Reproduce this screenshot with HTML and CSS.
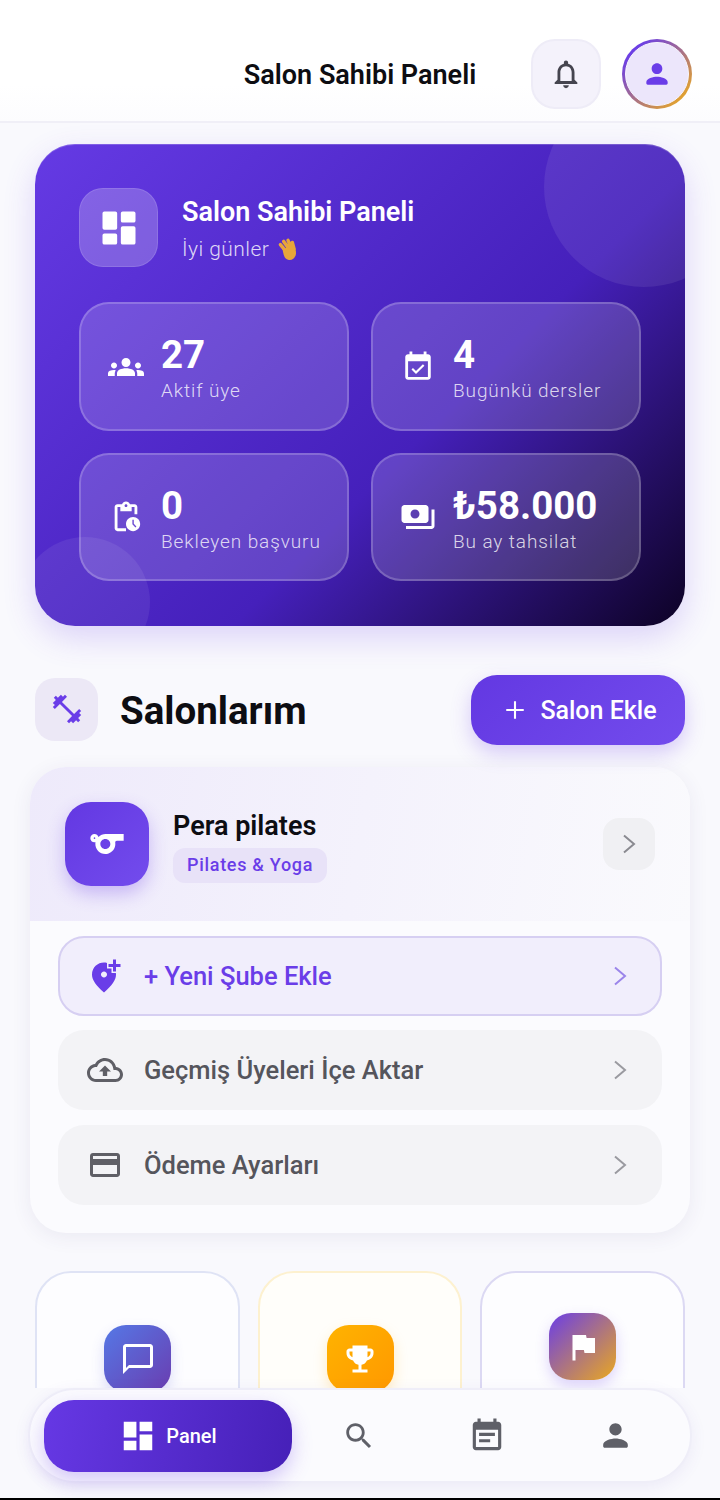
FILE: index.html
```html
<!DOCTYPE html>
<html lang="en">
<head>
  <meta charset="UTF-8" />
  <title>Salon Sahibi Paneli</title>
  <link rel="stylesheet" href="styles.css">
</head>
<body>
  <div class="page">

    <header class="topbar">
      <h1 class="topbar-title">Salon Sahibi Paneli</h1>
      <div class="topbar-actions">
        <button class="bell-btn">
          <svg width="34" height="34" viewBox="0 0 24 24" fill="#45454f"><path d="M12 22c1.1 0 2-.9 2-2h-4c0 1.1.9 2 2 2zm6-6v-5c0-3.07-1.63-5.64-4.5-6.32V4c0-.83-.67-1.5-1.5-1.5s-1.5.67-1.5 1.5v.68C7.64 5.36 6 7.92 6 11v5l-2 2v1h16v-1l-2-2zm-2 1H8v-6c0-2.48 1.51-4.5 4-4.5s4 2.02 4 4.5v6z"/></svg>
        </button>
        <div class="avatar-ring">
          <div class="avatar">
            <svg width="32" height="32" viewBox="0 0 24 24" fill="#6a3de8"><path d="M12 12c2.21 0 4-1.79 4-4s-1.79-4-4-4-4 1.79-4 4 1.79 4 4 4zm0 2c-2.67 0-8 1.34-8 4v1c0 .55.45 1 1 1h14c.55 0 1-.45 1-1v-1c0-2.66-5.33-4-8-4z"/></svg>
          </div>
        </div>
      </div>
    </header>

    <main class="content">

      <!-- Summary card -->
      <section class="hero">
        <div class="hero-circle-top"></div>
        <div class="hero-circle-bottom"></div>

        <div class="hero-head">
          <div class="hero-icon">
            <svg width="44" height="44" viewBox="0 0 24 24" fill="#fff"><path d="M4 3h6a1 1 0 0 1 1 1v8a1 1 0 0 1-1 1H4a1 1 0 0 1-1-1V4a1 1 0 0 1 1-1zM14 3h6a1 1 0 0 1 1 1v4a1 1 0 0 1-1 1h-6a1 1 0 0 1-1-1V4a1 1 0 0 1 1-1zM14 11h6a1 1 0 0 1 1 1v8a1 1 0 0 1-1 1h-6a1 1 0 0 1-1-1v-8a1 1 0 0 1 1-1zM4 15h6a1 1 0 0 1 1 1v4a1 1 0 0 1-1 1H4a1 1 0 0 1-1-1v-4a1 1 0 0 1 1-1z"/></svg>
          </div>
          <div class="hero-text">
            <h2 class="hero-title">Salon Sahibi Paneli</h2>
            <p class="hero-sub">İyi günler
              <svg class="wave" width="26" height="26" viewBox="0 0 24 24"><g fill="#e8a63a" stroke="#e8a63a" stroke-linecap="round"><path stroke-width="3.2" d="M5 8l5 6M8 5l5 7M12 4l3 7M16 6l1.6 6"/><path stroke="none" d="M7 12l10-3c2 2 3 6 2 9-1 3-4 5-7 4-3-1-4-3-5-10z"/></g></svg>
            </p>
          </div>
        </div>

        <div class="stats">
          <div class="stat">
            <svg class="stat-icon" width="36" height="36" viewBox="0 0 24 24" fill="#fff"><path d="M4 13c1.1 0 2-.9 2-2s-.9-2-2-2-2 .9-2 2 .9 2 2 2zm1.13 1.1c-.37-.06-.74-.1-1.13-.1-.99 0-1.93.21-2.78.58C.48 14.9 0 15.62 0 16.43V18h4.5v-1.61c0-.83.23-1.61.63-2.29zM20 13c1.1 0 2-.9 2-2s-.9-2-2-2-2 .9-2 2 .9 2 2 2zm4 3.43c0-.81-.48-1.53-1.22-1.85-.85-.37-1.79-.58-2.78-.58-.39 0-.76.04-1.13.1.4.68.63 1.46.63 2.29V18H24v-1.57zm-7.76-2.78c-1.17-.52-2.61-.9-4.24-.9-1.63 0-3.07.39-4.24.9C6.68 14.13 6 15.21 6 16.39V18h12v-1.61c0-1.18-.68-2.26-1.76-2.74zM12 12c1.66 0 3-1.34 3-3s-1.34-3-3-3-3 1.34-3 3 1.34 3 3 3z"/></svg>
            <div>
              <div class="stat-num">27</div>
              <div class="stat-label">Aktif üye</div>
            </div>
          </div>
          <div class="stat">
            <svg class="stat-icon" width="34" height="34" viewBox="0 0 24 24" fill="#fff"><path d="M16.53 11.06L15.47 10l-4.88 4.88-2.12-2.12-1.06 1.06L10.59 17l5.94-5.94zM19 3h-1V1h-2v2H8V1H6v2H5c-1.11 0-1.99.9-1.99 2L3 19c0 1.1.89 2 2 2h14c1.1 0 2-.9 2-2V5c0-1.1-.9-2-2-2zm0 16H5V8h14v11z"/></svg>
            <div>
              <div class="stat-num">4</div>
              <div class="stat-label">Bugünkü dersler</div>
            </div>
          </div>
          <div class="stat">
            <svg class="stat-icon" width="34" height="34" viewBox="0 0 24 24" fill="#fff"><path d="M17 12c-2.76 0-5 2.24-5 5s2.24 5 5 5 5-2.24 5-5-2.24-5-5-5zm1.65 7.35L16.5 17.2V14h1v2.79l1.85 1.85-.7.71zM18 3h-3.18C14.4 1.84 13.3 1 12 1s-2.4.84-2.82 2H6c-1.1 0-2 .9-2 2v15c0 1.1.9 2 2 2h6v-2H6V5h2v3h8V5h2v5h2V5c0-1.1-.9-2-2-2zm-6 2c-.55 0-1-.45-1-1s.45-1 1-1 1 .45 1 1-.45 1-1 1z"/></svg>
            <div>
              <div class="stat-num">0</div>
              <div class="stat-label">Bekleyen başvuru</div>
            </div>
          </div>
          <div class="stat">
            <svg class="stat-icon" width="36" height="36" viewBox="0 0 24 24" fill="#fff"><path d="M19 14V6c0-1.1-.9-2-2-2H3c-1.1 0-2 .9-2 2v8c0 1.1.9 2 2 2h14c1.1 0 2-.9 2-2zm-9-1c-1.66 0-3-1.34-3-3s1.34-3 3-3 3 1.34 3 3-1.34 3-3 3zm13-6v11c0 1.1-.9 2-2 2H4v-2h17V7h2z"/></svg>
            <div>
              <div class="stat-num">₺58.000</div>
              <div class="stat-label">Bu ay tahsilat</div>
            </div>
          </div>
        </div>
      </section>

      <!-- Section title -->
      <div class="section-head">
        <div class="section-left">
          <div class="section-icon">
            <svg width="34" height="34" viewBox="0 0 24 24" fill="#6a3de8"><path d="M20.57 14.86L22 13.43 20.57 12 17 15.57 8.43 7 12 3.43 10.57 2 9.14 3.43 7.71 2 5.57 4.14 4.14 2.71 2.71 4.14l1.43 1.43L2 7.71l1.43 1.43L2 10.57 3.43 12 7 8.43 15.57 17 12 20.57 13.43 22l1.43-1.43L16.29 22l2.14-2.14 1.43 1.43 1.43-1.43-1.43-1.43L22 16.29z"/></svg>
          </div>
          <h2 class="section-title">Salonlarım</h2>
        </div>
        <button class="add-btn">
          <svg width="28" height="28" viewBox="0 0 24 24" fill="none" stroke="#fff" stroke-width="1.8"><path d="M12 4.5v15M4.5 12h15"/></svg>
          Salon Ekle
        </button>
      </div>

      <!-- Salon card -->
      <section class="salon">
        <div class="salon-head">
          <div class="salon-icon">
            <svg width="40" height="40" viewBox="0 0 24 24" fill="#fff"><path d="M11.23 6c-1.66 0-3.22.66-4.36 1.73C6.54 6.73 5.61 6 4.5 6 3.12 6 2 7.12 2 8.5S3.12 11 4.5 11c.21 0 .41-.03.61-.08-.05.25-.09.51-.1.78-.18 3.68 2.95 6.68 6.68 6.27 2.55-.28 4.68-2.26 5.19-4.77.15-.71.15-1.4.06-2.06-.09-.6.38-1.13.99-1.13H22V6H11.23zM4.5 9c-.28 0-.5-.22-.5-.5s.22-.5.5-.5.5.22.5.5-.22.5-.5.5zm6.5 6c-1.66 0-3-1.34-3-3s1.34-3 3-3 3 1.34 3 3-1.34 3-3 3z"/></svg>
          </div>
          <div class="salon-info">
            <div class="salon-name">Pera pilates</div>
            <span class="salon-tag">Pilates &amp; Yoga</span>
          </div>
          <div class="salon-arrow">
            <svg width="20" height="24" viewBox="0 0 20 24" fill="none" stroke="#8a8a90" stroke-width="2"><path d="M5 3.5L15 12 5 20.5"/></svg>
          </div>
        </div>

        <div class="salon-rows">
          <div class="row row-new">
            <svg class="row-icon" width="36" height="36" viewBox="0 0 24 24" fill="#6a3de8"><path d="M20 1v3h3v2h-3v3h-2V6h-3V4h3V1h2zm-8 12c1.1 0 2-.9 2-2s-.9-2-2-2-2 .9-2 2 .9 2 2 2zm2-9.75V7h3v3h2.92c.05.39.08.79.08 1.2 0 3.32-2.67 7.25-8 11.8-5.33-4.55-8-8.48-8-11.8C4 6.22 7.8 3 12 3c.68 0 1.35.08 2 .25z"/></svg>
            <span class="row-text">+ Yeni Şube Ekle</span>
            <svg width="20" height="24" viewBox="0 0 20 24" fill="none" stroke="#9b85ea" stroke-width="2"><path d="M5 3.5L15 12 5 20.5"/></svg>
          </div>
          <div class="row">
            <svg class="row-icon" width="36" height="36" viewBox="0 0 24 24" fill="#5f5f66"><path d="M19.35 10.04C18.67 6.59 15.64 4 12 4 9.11 4 6.6 5.64 5.35 8.04 2.34 8.36 0 10.91 0 14c0 3.31 2.69 6 6 6h13c2.76 0 5-2.24 5-5 0-2.64-2.05-4.78-4.65-4.96zM19 18H6c-2.21 0-4-1.79-4-4 0-2.05 1.53-3.76 3.56-3.97l1.07-.11.5-.95C8.08 7.14 9.94 6 12 6c2.62 0 4.88 1.86 5.39 4.43l.3 1.5 1.53.11c1.56.1 2.78 1.41 2.78 2.96 0 1.65-1.35 3-3 3zM8 13h2.55v3h2.9v-3H16l-4-4z"/></svg>
            <span class="row-text">Geçmiş Üyeleri İçe Aktar</span>
            <svg width="20" height="24" viewBox="0 0 20 24" fill="none" stroke="#9a9aa0" stroke-width="2"><path d="M5 3.5L15 12 5 20.5"/></svg>
          </div>
          <div class="row row-last">
            <svg class="row-icon" width="36" height="36" viewBox="0 0 24 24" fill="#5f5f66"><path d="M20 4H4c-1.11 0-1.99.89-1.99 2L2 18c0 1.11.89 2 2 2h16c1.11 0 2-.89 2-2V6c0-1.11-.89-2-2-2zm0 14H4v-6h16v6zm0-10H4V6h16v2z"/></svg>
            <span class="row-text">Ödeme Ayarları</span>
            <svg width="20" height="24" viewBox="0 0 20 24" fill="none" stroke="#9a9aa0" stroke-width="2"><path d="M5 3.5L15 12 5 20.5"/></svg>
          </div>
        </div>
      </section>

      <!-- Quick links, cut off by the nav -->
      <div class="quick">
        <div class="quick-card quick-blue">
          <div class="quick-icon icon-chat">
            <svg width="36" height="36" viewBox="0 0 24 24" fill="#fff"><path d="M20 2H4c-1.1 0-2 .9-2 2v18l4-4h14c1.1 0 2-.9 2-2V4c0-1.1-.9-2-2-2zm0 14H6l-2 2V4h16v12z"/></svg>
          </div>
        </div>
        <div class="quick-card quick-yellow">
          <div class="quick-icon icon-cup">
            <svg width="36" height="36" viewBox="0 0 24 24" fill="#fff"><path d="M19 5h-2V3H7v2H5c-1.1 0-2 .9-2 2v1c0 2.55 1.92 4.63 4.39 4.94.63 1.5 1.98 2.63 3.61 2.96V19H7v2h10v-2h-4v-3.1c1.63-.33 2.98-1.46 3.61-2.96C19.08 12.63 21 10.55 21 8V7c0-1.1-.9-2-2-2zM5 8V7h2v3.82C5.84 10.4 5 9.3 5 8zm14 0c0 1.3-.84 2.4-2 2.82V7h2v1z"/></svg>
          </div>
        </div>
        <div class="quick-card quick-violet">
          <div class="quick-icon icon-flag">
            <svg width="36" height="36" viewBox="0 0 24 24" fill="#fff"><path d="M14.4 6L14 4H5v17h2v-7h5.6l.4 2h7V6z"/></svg>
          </div>
        </div>
      </div>
    </main>

    <!-- Bottom nav -->
    <div class="nav-wrap">
      <nav class="nav">
        <div class="nav-active">
          <svg width="38" height="38" viewBox="0 0 24 24" fill="#fff"><path d="M3 3h8v10H3zM13 3h8v6h-8zM13 11h8v10h-8zM3 15h8v6H3z"/></svg>
          <span>Panel</span>
        </div>
        <div class="nav-item">
          <svg width="34" height="34" viewBox="0 0 24 24" fill="#5f6068"><path d="M15.5 14h-.79l-.28-.27C15.41 12.59 16 11.11 16 9.5 16 5.91 13.09 3 9.5 3S3 5.91 3 9.5 5.91 16 9.5 16c1.61 0 3.09-.59 4.23-1.57l.27.28v.79l5 4.99L20.49 19l-4.99-5zm-6 0C7.01 14 5 11.99 5 9.5S7.01 5 9.5 5 14 7.01 14 9.5 11.99 14 9.5 14z"/></svg>
        </div>
        <div class="nav-item">
          <svg width="38" height="38" viewBox="0 0 24 24" fill="#5f6068"><path d="M17 10H7v2h10v-2zm2-7h-1V1h-2v2H8V1H6v2H5c-1.11 0-1.99.9-1.99 2L3 19c0 1.1.89 2 2 2h14c1.1 0 2-.9 2-2V5c0-1.1-.9-2-2-2zm0 16H5V8h14v11zm-5-5H7v2h7v-2z"/></svg>
        </div>
        <div class="nav-item">
          <svg width="37" height="37" viewBox="0 0 24 24" fill="#5f6068"><path d="M12 12c2.21 0 4-1.79 4-4s-1.79-4-4-4-4 1.79-4 4 1.79 4 4 4zm0 2c-2.67 0-8 1.34-8 4v1c0 .55.45 1 1 1h14c.55 0 1-.45 1-1v-1c0-2.66-5.33-4-8-4z"/></svg>
        </div>
      </nav>
    </div>

    <div class="bottom-strip"></div>
  </div>
</body>
</html>
```

FILE: styles.css
```css
* {
  margin: 0;
  padding: 0;
  box-sizing: border-box;
}

html, body {
  height: 100%;
  font-family: Roboto, 'Noto Sans', sans-serif;
  background: #f9f9fd;
}

button {
  font-family: inherit;
  border: none;
}

.page {
  height: 1500px;
  display: flex;
  flex-direction: column;
  overflow: hidden;
}

/* Top bar */
.topbar {
  position: relative;
  height: 123px;
  flex-shrink: 0;
  padding: 39px 28px 0 0;
  background: linear-gradient(180deg, #ffffff 70%, #fcfcfe 100%);
  border-bottom: 2px solid #f0eff7;
  display: flex;
  justify-content: flex-end;
}

.topbar-title {
  position: absolute;
  left: 0;
  right: 0;
  top: 57px;
  text-align: center;
  font-size: 27px;
  line-height: 36px;
  font-weight: 600;
  color: #0d0d12;
}

.topbar-actions {
  display: flex;
  gap: 21px;
  height: 70px;
}

.bell-btn {
  width: 70px;
  height: 70px;
  border-radius: 24px;
  background: #f4f2fb;
  border: 2px solid #eeecf7;
  display: flex;
  align-items: center;
  justify-content: center;
}

.avatar-ring {
  width: 70px;
  height: 70px;
  border-radius: 50%;
  padding: 3px;
  background: linear-gradient(135deg, #6a3de8 15%, #e9a825 90%);
}

.avatar {
  width: 100%;
  height: 100%;
  border-radius: 50%;
  background: #ece6fb;
  border: 1px solid #f8f6fe;
  display: flex;
  align-items: center;
  justify-content: center;
}

/* Scroll area */
.content {
  height: 1265px;
  flex-shrink: 0;
  overflow: hidden;
  padding-top: 21px;
}

/* Hero */
.hero {
  position: relative;
  overflow: hidden;
  width: 650px;
  height: 482px;
  margin: 0 35px;
  padding: 44px;
  border-radius: 40px;
  background: linear-gradient(135deg, #653ae4 0%, #4520bb 60%, #0d0225 100%);
  box-shadow: 0 12px 32px rgba(106, 61, 232, 0.2), inset 0 1px 0 rgba(255, 255, 255, 0.2);
  color: #fff;
}

.hero-circle-top {
  position: absolute;
  width: 200px;
  height: 200px;
  top: -57px;
  right: -59px;
  border-radius: 50%;
  background: rgba(255, 255, 255, 0.08);
}

.hero-circle-bottom {
  position: absolute;
  width: 130px;
  height: 130px;
  left: -15px;
  bottom: -41px;
  border-radius: 50%;
  background: rgba(255, 255, 255, 0.07);
}

.hero-head {
  position: relative;
  display: flex;
  align-items: center;
  gap: 24px;
  margin-bottom: 35px;
}

.hero-icon {
  width: 79px;
  height: 79px;
  border-radius: 24px;
  background: rgba(255, 255, 255, 0.22);
  border: 1px solid rgba(255, 255, 255, 0.12);
  display: flex;
  align-items: center;
  justify-content: center;
}

.hero-text {
  padding-top: 2px;
}

.hero-title {
  font-size: 27px;
  line-height: 36px;
  font-weight: 600;
}

.hero-sub {
  margin-top: 5px;
  font-size: 21px;
  line-height: 28px;
  font-weight: 300;
  letter-spacing: 0.45px;
  color: rgba(255, 255, 255, 0.82);
  display: flex;
  align-items: center;
  gap: 6px;
}

.stats {
  position: relative;
  display: grid;
  grid-template-columns: 270px 270px;
  grid-template-rows: 129px 128px;
  gap: 22px;
}

.stat {
  display: grid;
  grid-template-columns: 36px 1fr;
  align-items: center;
  column-gap: 17px;
  padding-left: 27px;
  border-radius: 30px;
  background: rgba(255, 255, 255, 0.16);
  border: 2px solid rgba(255, 255, 255, 0.2);
}

.stat-icon {
  justify-self: center;
}

.stat-num {
  font-size: 38.5px;
  line-height: 49px;
  font-weight: 700;
}

.stat-label {
  font-size: 19px;
  line-height: 24px;
  font-weight: 300;
  letter-spacing: 0.9px;
  color: rgba(255, 255, 255, 0.8);
}

/* Section header */
.section-head {
  margin: 49px 35px 22px;
  display: flex;
  justify-content: space-between;
  align-items: center;
}

.section-left {
  display: flex;
  align-items: center;
  gap: 22px;
  margin-bottom: 2px;
}

.section-icon {
  width: 63px;
  height: 63px;
  border-radius: 20px;
  background: #ece8f6;
  display: flex;
  align-items: center;
  justify-content: center;
}

.section-title {
  margin-top: 2px;
  font-size: 38.5px;
  font-weight: 700;
  color: #0d0d12;
}

.add-btn {
  width: 214px;
  height: 70px;
  padding-left: 2px;
  border-radius: 26px;
  background: linear-gradient(135deg, #6338e2, #734ced);
  color: #fff;
  font-size: 25px;
  font-weight: 500;
  display: flex;
  align-items: center;
  justify-content: center;
  gap: 11px;
  box-shadow: 0 8px 20px rgba(106, 61, 232, 0.25);
}

/* Salon card */
.salon {
  width: 660px;
  height: 466px;
  margin: 0 30px;
  border-radius: 36px;
  overflow: hidden;
  background: #fbfbfe;
  box-shadow: 0 4px 20px rgba(60, 50, 120, 0.08);
}

.salon-head {
  height: 154px;
  padding: 0 35px;
  display: flex;
  align-items: center;
  background: linear-gradient(100deg, #eeeafb 0%, #f4f2fc 50%, #fafafd 100%);
}

.salon-icon {
  width: 84px;
  height: 84px;
  border-radius: 26px;
  background: linear-gradient(135deg, #6338e2, #734ced);
  box-shadow: 0 8px 18px rgba(106, 61, 232, 0.3);
  display: flex;
  align-items: center;
  justify-content: center;
}

.salon-info {
  margin-left: 24px;
  margin-top: 4px;
  flex: 1;
}

.salon-name {
  font-size: 27px;
  line-height: 34px;
  font-weight: 600;
  color: #0d0d12;
}

.salon-tag {
  display: inline-block;
  margin-top: 5px;
  padding: 0 14px;
  height: 35px;
  line-height: 33px;
  border-radius: 12px;
  background: #e8e2f8;
  color: #6a3de8;
  font-size: 18px;
  font-weight: 500;
  letter-spacing: 0.7px;
}

.salon-arrow {
  width: 52px;
  height: 52px;
  border-radius: 16px;
  background: #f0f0f3;
  display: flex;
  align-items: center;
  justify-content: center;
}

.salon-rows {
  padding: 15px 28px 0;
  display: flex;
  flex-direction: column;
  gap: 14px;
}

.row {
  height: 80px;
  padding: 0 32px 0 29px;
  border-radius: 26px;
  background: #f3f3f6;
  display: flex;
  align-items: center;
}

.row-new {
  padding: 0 30px 0 26px;
  background: #f1eefc;
  border: 2px solid #d6cff2;
}

.row-last {
  margin-top: 1px;
}

.row-icon {
  flex-shrink: 0;
}

.row-text {
  flex: 1;
  margin-left: 21px;
  font-size: 25.5px;
  font-weight: 500;
  color: #55555c;
}

.row-new .row-text {
  margin-left: 22px;
  color: #6a3de8;
}

/* Quick cards */
.quick {
  margin: 38px 35px 0;
  display: grid;
  grid-template-columns: 205px 204px 205px;
  gap: 18px;
}

.quick-card {
  height: 200px;
  padding-top: 52px;
  border-radius: 36px;
  border: 2px solid #dfe3f5;
  background: #fdfdff;
  display: flex;
  justify-content: center;
  align-items: flex-start;
}

.quick-yellow {
  border-color: #fdf1cf;
  background: #fffefa;
}

.quick-violet {
  border-color: #dcd9f3;
  padding-top: 40px;
}

.quick-icon {
  width: 67px;
  height: 67px;
  border-radius: 22px;
  display: flex;
  align-items: center;
  justify-content: center;
}

.icon-chat {
  background: linear-gradient(135deg, #5578e6, #6a3db0);
  box-shadow: 0 6px 14px rgba(85, 90, 220, 0.2);
}

.icon-cup {
  background: linear-gradient(135deg, #ffb300, #ff9800);
  box-shadow: 0 6px 14px rgba(255, 170, 0, 0.22);
}

.icon-flag {
  background: linear-gradient(135deg, #6a3de8, #eaa820);
  box-shadow: 0 6px 14px rgba(106, 61, 232, 0.22);
}

/* Bottom nav */
.nav-wrap {
  height: 110px;
  flex-shrink: 0;
  padding: 0 28px;
}

.nav {
  height: 95px;
  padding: 0 11px 0 14px;
  border-radius: 48px;
  background: #fbfbfe;
  border: 2px solid #efeef8;
  box-shadow: 0 4px 16px rgba(90, 70, 180, 0.08);
  display: flex;
  align-items: center;
}

.nav-active {
  width: 248px;
  height: 72px;
  margin-right: 3px;
  border-radius: 30px;
  background: linear-gradient(100deg, #6638e4, #4620b8);
  box-shadow: 0 8px 20px rgba(106, 61, 232, 0.28);
  color: #fff;
  font-size: 20px;
  font-weight: 500;
  display: flex;
  align-items: center;
  justify-content: center;
  gap: 9px;
}

.nav-item {
  flex: 1;
  display: flex;
  align-items: center;
  justify-content: center;
}

.bottom-strip {
  height: 2px;
  flex-shrink: 0;
  background: #000;
}
```
